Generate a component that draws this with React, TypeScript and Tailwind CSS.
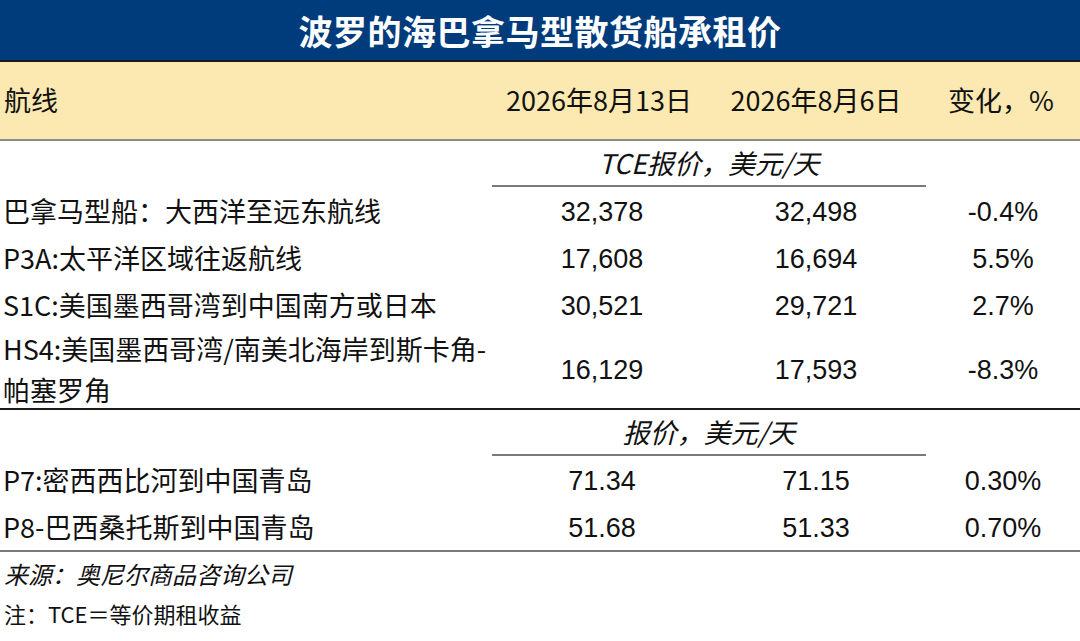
import React from "react";

const cjk = "font-['Noto_Sans_CJK_SC','Noto_Sans',sans-serif]";
const num = "font-['Liberation_Sans',Arial,sans-serif]";
const cols = "grid grid-cols-[492px_214px_220px_1fr]";

type Row = { label: React.ReactNode; a: string; b: string; c: string; tall?: boolean };

const tce: Row[] = [
  { label: "巴拿马型船：大西洋至远东航线", a: "32,378", b: "32,498", c: "-0.4%" },
  { label: "P3A:太平洋区域往返航线", a: "17,608", b: "16,694", c: "5.5%" },
  { label: "S1C:美国墨西哥湾到中国南方或日本", a: "30,521", b: "29,721", c: "2.7%" },
  {
    label: (
      <>
        HS4:美国墨西哥湾/南美北海岸到斯卡角-
        <br />
        帕塞罗角
      </>
    ),
    a: "16,129",
    b: "17,593",
    c: "-8.3%",
    tall: true,
  },
];

const price: Row[] = [
  { label: "P7:密西西比河到中国青岛", a: "71.34", b: "71.15", c: "0.30%" },
  { label: "P8-巴西桑托斯到中国青岛", a: "51.68", b: "51.33", c: "0.70%" },
];

function DataRow({ r }: { r: Row }) {
  return (
    <div className={`${cols} items-center ${r.tall ? "h-[80px]" : "h-[47px]"}`}>
      <div className={`${cjk} whitespace-nowrap pl-[3px] text-[27px] leading-[41px] text-[#111]`}>{r.label}</div>
      <div className={`${num} pl-[6px] pt-[3px] text-center text-[27px] text-[#111]`}>{r.a}</div>
      <div className={`${num} pt-[3px] text-center text-[27px] text-[#111]`}>{r.b}</div>
      <div className={`${num} pt-[3px] text-center text-[27px] text-[#111]`}>{r.c}</div>
    </div>
  );
}

function Unit({ text, h }: { text: string; h: string }) {
  return (
    <div className={`${cols} ${h}`}>
      <div />
      <div className="col-span-2 flex items-center justify-center border-b-2 border-[#7a7a7a]">
        <span className={`${cjk} text-[27px] italic text-[#111]`}>{text}</span>
      </div>
      <div />
    </div>
  );
}

export default function App() {
  return (
    <div className="h-[641px] w-[1080px] overflow-hidden bg-white">
      <div className="flex h-[62px] items-center justify-center border-b-2 border-[#1a1a1a] bg-[#003c7c]">
        <h1 className={`${cjk} text-[34px] font-bold tracking-[0.5px] text-white`}>波罗的海巴拿马型散货船承租价</h1>
      </div>

      <div className={`${cols} h-[79px] items-center border-b-2 border-[#8a8a8a] bg-[#fbe9b1] ${cjk} text-[27px] text-[#111]`}>
        <div className="pl-[4px]">航线</div>
        <div className="text-center">2026年8月13日</div>
        <div className="text-center">2026年8月6日</div>
        <div className="pr-[4px] text-center">变化，%</div>
      </div>

      <Unit text="TCE报价，美元/天" h="h-[46px]" />
      {tce.map((r, i) => (
        <DataRow key={i} r={r} />
      ))}

      <div className="border-b-2 border-[#1a1a1a]" />

      <Unit text="报价，美元/天" h="h-[46px]" />
      {price.map((r, i) => (
        <DataRow key={i} r={r} />
      ))}

      <div className="border-b-2 border-[#7a7a7a]" />

      <div className={`${cjk} pl-[4px] text-[#111]`}>
        <div className="flex h-[44px] items-center text-[24px] italic">来源：奥尼尔商品咨询公司</div>
        <div className="flex h-[34px] items-center text-[22px]">注：TCE＝等价期租收益</div>
      </div>
    </div>
  );
}
